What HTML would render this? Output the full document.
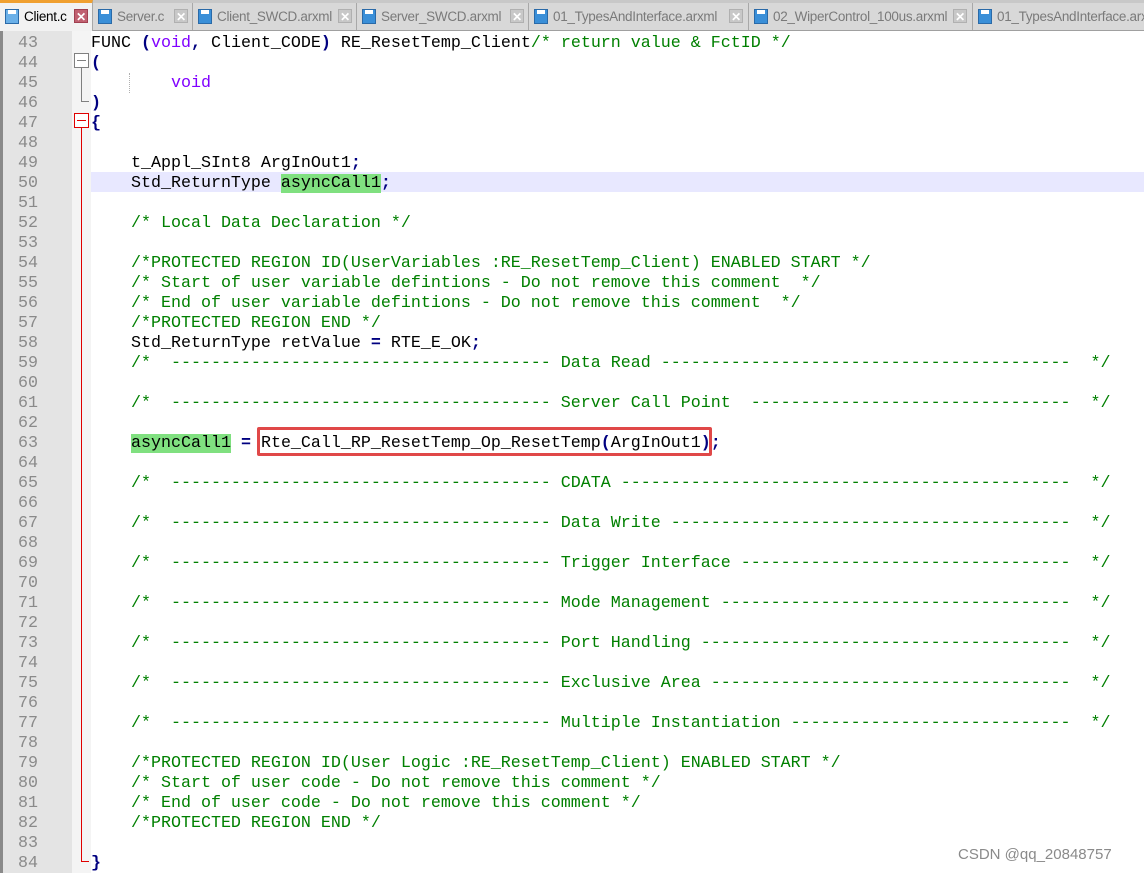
<!DOCTYPE html>
<html><head><meta charset="utf-8"><style>
*{margin:0;padding:0;box-sizing:border-box}
body{width:1144px;height:873px;background:#fff;position:relative;overflow:hidden;font-family:"Liberation Mono",monospace}
.tabs{position:absolute;left:0;top:0;width:1144px;height:31px;background:#c8c8c8;border-bottom:2px solid #a0a0a0}
.tab{position:absolute;top:3px;height:27px;background:#d8d8d8;border-right:1px solid #a8a8a8;font-family:"Liberation Sans",sans-serif;font-size:13.5px;color:#7a7a7a;line-height:27px;padding-left:24px;white-space:nowrap;overflow:hidden;letter-spacing:-0.3px}
.tab.act{top:0;height:31px;background:#f2f2f2;color:#000;border-top:3px solid #f0a030;line-height:27px}
.ic{position:absolute;left:5px;top:6px;width:14px;height:15px;background:#3a8fd8;border:1px solid #2a6aa8}
.ic::after{content:"";position:absolute;left:2px;top:0;width:8px;height:4px;background:#fff}
.act .ic{background:#6ab0e8}
.x{position:absolute;top:6px;width:14px;height:14px;background:#c8c8c8;color:#fff;font-size:12px;line-height:14px;text-align:center;font-weight:bold;border:1px solid #b0b0b0}
.act .x{background:#c06070;border-color:#a04050}
.gut{position:absolute;left:0;top:31px;width:72px;height:842px;background:#e4e4e4;border-left:3px solid #8a8a8a}
.fold{position:absolute;left:72px;top:31px;width:19px;height:842px;background:#f4f4f4}
.ln{position:absolute;left:0;width:38px;text-align:right;color:#8a8a8a;font-size:16.67px;line-height:20px;margin-top:2px}
.cl{position:absolute;left:91px;font-size:16.67px;line-height:20px;white-space:pre;color:#000;margin-top:2px}
.c{color:#008000}.k{color:#8000ff}.o{color:#000080;font-weight:bold}
.hl{background:#80e080}
</style></head><body>
<div class="tabs">
<div class="tab act" style="left:0;width:93px"><span class="ic"></span>Client.c<span class="x" style="left:74px;top:6px">✕</span></div>
<div class="tab" style="left:93px;width:100px"><span class="ic"></span>Server.c<span class="x" style="left:81px">✕</span></div>
<div class="tab" style="left:193px;width:164px"><span class="ic"></span>Client_SWCD.arxml<span class="x" style="left:145px">✕</span></div>
<div class="tab" style="left:357px;width:172px"><span class="ic"></span>Server_SWCD.arxml<span class="x" style="left:153px">✕</span></div>
<div class="tab" style="left:529px;width:220px"><span class="ic"></span>01_TypesAndInterface.arxml<span class="x" style="left:200px">✕</span></div>
<div class="tab" style="left:749px;width:224px"><span class="ic"></span>02_WiperControl_100us.arxml<span class="x" style="left:204px">✕</span></div>
<div class="tab" style="left:973px;width:171px;border-right:none"><span class="ic"></span>01_TypesAndInterface.arxml</div>
</div>
<div class="gut"></div>
<div class="fold"></div>
<div style="position:absolute;left:91px;right:0;top:172px;height:20px;background:#e8e8ff"></div>
<div style="position:absolute;left:74px;top:53px;width:15px;height:15px;border:1px solid #808080;background:#fff"></div>
<div style="position:absolute;left:77px;top:60px;width:9px;height:1px;background:#808080"></div>
<div style="position:absolute;left:81px;top:68px;width:1px;height:34px;background:#808080"></div>
<div style="position:absolute;left:81px;top:101px;width:8px;height:1px;background:#808080"></div>
<div style="position:absolute;left:74px;top:113px;width:15px;height:15px;border:1px solid #e00000;background:#fff"></div>
<div style="position:absolute;left:77px;top:120px;width:9px;height:1px;background:#e00000"></div>
<div style="position:absolute;left:81px;top:128px;width:1px;height:734px;background:#e00000"></div>
<div style="position:absolute;left:81px;top:861px;width:8px;height:1px;background:#e00000"></div>
<div style="position:absolute;left:129px;top:73px;width:1px;height:20px;border-left:1px dotted #b0b0b0"></div>
<div style="position:absolute;left:257px;top:427px;width:455px;height:29px;border:3px solid #e04848;border-radius:2px"></div>

<div class="ln" style="top:32px">43</div><div class="ln" style="top:52px">44</div><div class="ln" style="top:72px">45</div><div class="ln" style="top:92px">46</div><div class="ln" style="top:112px">47</div><div class="ln" style="top:132px">48</div><div class="ln" style="top:152px">49</div><div class="ln" style="top:172px">50</div><div class="ln" style="top:192px">51</div><div class="ln" style="top:212px">52</div><div class="ln" style="top:232px">53</div><div class="ln" style="top:252px">54</div><div class="ln" style="top:272px">55</div><div class="ln" style="top:292px">56</div><div class="ln" style="top:312px">57</div><div class="ln" style="top:332px">58</div><div class="ln" style="top:352px">59</div><div class="ln" style="top:372px">60</div><div class="ln" style="top:392px">61</div><div class="ln" style="top:412px">62</div><div class="ln" style="top:432px">63</div><div class="ln" style="top:452px">64</div><div class="ln" style="top:472px">65</div><div class="ln" style="top:492px">66</div><div class="ln" style="top:512px">67</div><div class="ln" style="top:532px">68</div><div class="ln" style="top:552px">69</div><div class="ln" style="top:572px">70</div><div class="ln" style="top:592px">71</div><div class="ln" style="top:612px">72</div><div class="ln" style="top:632px">73</div><div class="ln" style="top:652px">74</div><div class="ln" style="top:672px">75</div><div class="ln" style="top:692px">76</div><div class="ln" style="top:712px">77</div><div class="ln" style="top:732px">78</div><div class="ln" style="top:752px">79</div><div class="ln" style="top:772px">80</div><div class="ln" style="top:792px">81</div><div class="ln" style="top:812px">82</div><div class="ln" style="top:832px">83</div><div class="ln" style="top:852px">84</div>

<div class="cl" style="top:32px">FUNC <span class="o">(</span><span class="k">void</span><span class="o">,</span> Client_CODE<span class="o">)</span> RE_ResetTemp_Client<span class="c">/* return value &amp; FctID */</span></div>
<div class="cl" style="top:52px"><span class="o">(</span></div>
<div class="cl" style="top:72px">        <span class="k">void</span></div>
<div class="cl" style="top:92px"><span class="o">)</span></div>
<div class="cl" style="top:112px"><span class="o">{</span></div>
<div class="cl" style="top:152px">    t_Appl_SInt8 ArgInOut1<span class="o">;</span></div>
<div class="cl" style="top:172px">    Std_ReturnType <span class="hl">asyncCall1</span><span class="o">;</span></div>
<div class="cl c" style="top:212px">    /* Local Data Declaration */</div>
<div class="cl c" style="top:252px">    /*PROTECTED REGION ID(UserVariables :RE_ResetTemp_Client) ENABLED START */</div>
<div class="cl c" style="top:272px">    /* Start of user variable defintions - Do not remove this comment  */</div>
<div class="cl c" style="top:292px">    /* End of user variable defintions - Do not remove this comment  */</div>
<div class="cl c" style="top:312px">    /*PROTECTED REGION END */</div>
<div class="cl" style="top:332px">    Std_ReturnType retValue <span class="o">=</span> RTE_E_OK<span class="o">;</span></div>
<div class="cl c" style="top:352px">    /*  -------------------------------------- Data Read -----------------------------------------  */</div>
<div class="cl c" style="top:392px">    /*  -------------------------------------- Server Call Point  --------------------------------  */</div>
<div class="cl" style="top:432px">    <span class="hl">asyncCall1</span> <span class="o">=</span> Rte_Call_RP_ResetTemp_Op_ResetTemp<span class="o">(</span>ArgInOut1<span class="o">);</span></div>
<div class="cl c" style="top:472px">    /*  -------------------------------------- CDATA ---------------------------------------------  */</div>
<div class="cl c" style="top:512px">    /*  -------------------------------------- Data Write ----------------------------------------  */</div>
<div class="cl c" style="top:552px">    /*  -------------------------------------- Trigger Interface ---------------------------------  */</div>
<div class="cl c" style="top:592px">    /*  -------------------------------------- Mode Management -----------------------------------  */</div>
<div class="cl c" style="top:632px">    /*  -------------------------------------- Port Handling -------------------------------------  */</div>
<div class="cl c" style="top:672px">    /*  -------------------------------------- Exclusive Area ------------------------------------  */</div>
<div class="cl c" style="top:712px">    /*  -------------------------------------- Multiple Instantiation ----------------------------  */</div>
<div class="cl c" style="top:752px">    /*PROTECTED REGION ID(User Logic :RE_ResetTemp_Client) ENABLED START */</div>
<div class="cl c" style="top:772px">    /* Start of user code - Do not remove this comment */</div>
<div class="cl c" style="top:792px">    /* End of user code - Do not remove this comment */</div>
<div class="cl c" style="top:812px">    /*PROTECTED REGION END */</div>
<div class="cl" style="top:852px"><span class="o">}</span></div>
<div style="position:absolute;left:958px;top:846px;font-family:'Liberation Sans',sans-serif;font-size:15px;color:#8a8a8a">CSDN @qq_20848757</div>
</body></html>
